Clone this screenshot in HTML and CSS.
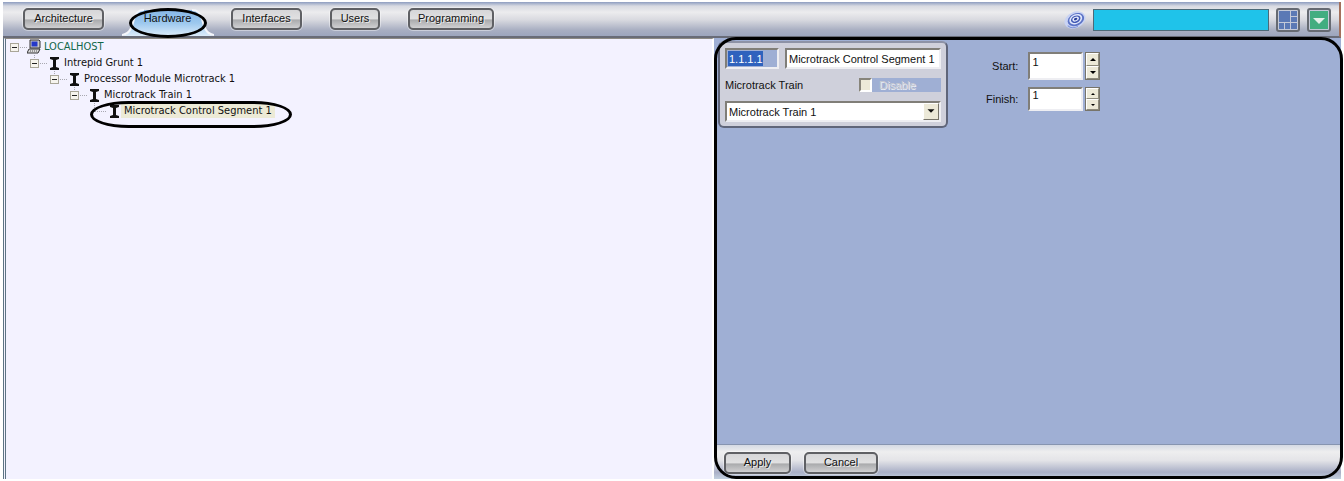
FILE: index.html
```html
<!DOCTYPE html>
<html lang="en">
  <head>
    <meta charset="UTF-8" />
    <meta name="viewport" content="width=device-width, initial-scale=1.0" />
    <title>Hardware</title>
    <link rel="stylesheet" href="styles.css">
  </head>
  <body>
    <!-- Shapes shared by the tree rows -->
    <svg class="defs" width="0" height="0">
      <symbol id="root" viewBox="0 0 17 16">
        <path d="M10 8.5h7" stroke="#a8a8b0" stroke-dasharray="1 1" />
        <rect x="0.5" y="4.5" width="8" height="8" fill="#f6f4ee" stroke="#a9a698" />
        <path d="M2 8.5h5" stroke="#222" />
      </symbol>
      <symbol id="toggle" viewBox="0 0 17 16">
        <path d="M4.5 0v4M10 8.5h7" stroke="#a8a8b0" stroke-dasharray="1 1" />
        <rect x="0.5" y="4.5" width="8" height="8" fill="#f6f4ee" stroke="#a9a698" />
        <path d="M2 8.5h5" stroke="#222" />
      </symbol>
      <symbol id="branch" viewBox="0 0 17 16">
        <path d="M4.5 0v9M5 8.5h12" stroke="#a8a8b0" stroke-dasharray="1 1" />
      </symbol>
      <symbol id="beam" viewBox="0 0 14 16">
        <path d="M3 2h9v2l-3 1v7l3 1v2h-9v-2l3-1v-7l-3-1z" fill="#111" />
      </symbol>
    </svg>

    <div class="app">
      <header class="toolbar">
        <nav class="tabs">
          <button class="btn tab-architecture">Architecture</button>
          <button class="tab-active">
            <svg class="tab-shape" width="92" height="27" viewBox="0 0 92 27">
              <defs>
                <linearGradient id="tabFill" x1="0" y1="0" x2="0" y2="1">
                  <stop offset="0" stop-color="#86b6e6" />
                  <stop offset="0.5" stop-color="#9cc8ee" />
                  <stop offset="1" stop-color="#dcecfa" />
                </linearGradient>
              </defs>
              <path d="M0 27C8 26 10 18 12 10Q14 1 22 1H70Q78 1 80 10C82 18 84 26 92 27Z" fill="url(#tabFill)" />
              <path d="M0 26C8 25 10 18 12 10Q14 1 22 1M70 1Q78 1 80 10C82 18 84 25 92 26" fill="none" stroke="#f4f6fb" stroke-width="2" />
            </svg>
            <span>Hardware</span>
          </button>
          <button class="btn tab-interfaces">Interfaces</button>
          <button class="btn tab-users">Users</button>
          <button class="btn tab-programming">Programming</button>
        </nav>
        <div class="status">
          <svg width="22" height="20" viewBox="0 0 22 20" fill="none">
            <g transform="rotate(-25 11 10)">
              <ellipse cx="11" cy="10" rx="11" ry="8" fill="#c9d3f3" />
              <ellipse cx="12" cy="10" rx="8.5" ry="6.2" fill="#5c73c6" />
              <ellipse cx="12" cy="9.600" rx="6.8" ry="4.8" fill="#dfe6fb" />
              <ellipse cx="12" cy="9.600" rx="5" ry="3.500" fill="#4259b4" />
              <ellipse cx="12" cy="9.400" rx="3.400" ry="2.200" fill="#e6ecfc" />
              <ellipse cx="12" cy="9.400" rx="1.800" ry="1.200" fill="#2b3f9c" />
              <path d="M2 12Q4 17 11 17" stroke="#7d92d8" />
            </g>
          </svg>
          <div class="status-bar"></div>
          <button class="icon-btn" aria-label="Layout">
            <svg width="18" height="18" viewBox="0 0 18 18" fill="#5b79b5">
              <path d="M0 0h11v11H0zM12 0h6v5h-6zM12 6h6v5h-6zM0 12h5v6H0zM6 12h5v6H6zM12 12h6v6h-6z" />
            </svg>
          </button>
          <button class="icon-btn" aria-label="Menu">
            <svg width="18" height="18" viewBox="0 0 18 18">
              <path d="M0 0h18v18H0z" fill="#42ad80" />
              <path d="M3 7h12l-6 6z" fill="#e2efe9" />
            </svg>
          </button>
        </div>
      </header>

      <main class="content">
        <section class="tree">
          <ul>
            <li>
              <div class="node host">
                <svg width="17" height="16"><use href="#root" /></svg>
                <svg width="14" height="16" viewBox="0 0 14 16">
                  <path d="M3 1h9l1 1v7H3z" fill="#c9c9c9" stroke="#333" />
                  <path d="M4.5 2.5h6v5h-6z" fill="#2438c8" />
                  <path d="M2 10h11l-2 4H0z" fill="#ddd" stroke="#333" />
                  <path d="M3 12h7" stroke="#555" stroke-dasharray="1 1" />
                </svg>
                <span>LOCALHOST</span>
              </div>
              <ul>
                <li>
                  <div class="node">
                    <svg width="17" height="16"><use href="#toggle" /></svg>
                    <svg width="14" height="16"><use href="#beam" /></svg>
                    <span>Intrepid Grunt 1</span>
                  </div>
                  <ul>
                    <li>
                      <div class="node">
                        <svg width="17" height="16"><use href="#toggle" /></svg>
                        <svg width="14" height="16"><use href="#beam" /></svg>
                        <span>Processor Module Microtrack 1</span>
                      </div>
                      <ul>
                        <li>
                          <div class="node">
                            <svg width="17" height="16"><use href="#toggle" /></svg>
                            <svg width="14" height="16"><use href="#beam" /></svg>
                            <span>Microtrack Train 1</span>
                          </div>
                          <ul>
                            <li>
                              <div class="node selected">
                                <svg width="17" height="16"><use href="#branch" /></svg>
                                <svg width="14" height="16"><use href="#beam" /></svg>
                                <span>Microtrack Control Segment 1</span>
                                <i class="ring ring-node"></i>
                              </div>
                            </li>
                          </ul>
                        </li>
                      </ul>
                    </li>
                  </ul>
                </li>
              </ul>
            </li>
          </ul>
        </section>

        <section class="details">
          <form class="form">
            <div class="card">
              <div class="row">
                <input class="field address" type="text" aria-label="Address" value="1.1.1.1" />
                <input class="field name" type="text" aria-label="Name" value="Microtrack Control Segment 1" />
              </div>
              <div class="row middle">
                <label for="train">Microtrack Train</label>
                <div class="disable">
                  <input type="checkbox" id="disable" disabled />
                  <label for="disable">Disable</label>
                </div>
              </div>
              <div class="select">
                <select class="field" id="train">
                  <option>Microtrack Train 1</option>
                </select>
                <svg class="arrow" width="16" height="17" viewBox="0 0 16 17">
                  <path d="M4 6h8l-4 4z" fill="#111" />
                </svg>
              </div>
            </div>

            <div class="range">
              <label for="start">Start:</label>
              <div class="spin spin-tall">
                <input class="field" type="text" id="start" value="1" />
                <div class="steps">
                  <button type="button" aria-label="Start up"><svg width="6" height="3"><path d="M0 3h6l-3-3z" /></svg></button>
                  <button type="button" aria-label="Start down"><svg width="6" height="3"><path d="M0 0h6l-3 3z" /></svg></button>
                </div>
              </div>
              <label for="finish">Finish:</label>
              <div class="spin">
                <input class="field" type="text" id="finish" value="1" />
                <div class="steps">
                  <button type="button" aria-label="Finish up"><svg width="4" height="2"><path d="M0 2h4l-2-2z" /></svg></button>
                  <button type="button" aria-label="Finish down"><svg width="4" height="2"><path d="M0 0h4l-2 2z" /></svg></button>
                </div>
              </div>
            </div>
          </form>
          <footer class="actions">
            <button class="btn apply">Apply</button>
            <button class="btn cancel">Cancel</button>
          </footer>
          <i class="ring ring-details"></i>
        </section>
      </main>
    </div>
  </body>
</html>
```
FILE: styles.css
```css
* {
  box-sizing: border-box;
}
body {
  margin: 0;
  background: #fff;
  color: #111;
  font-family: "Liberation Sans", Arial, sans-serif;
  font-size: 12px;
  line-height: 14px;
}
button,
input,
select {
  margin: 0;
  font: inherit;
  color: inherit;
}
svg {
  display: block;
  flex: none;
}
.defs {
  position: absolute;
}
.app {
  display: flex;
  flex-direction: column;
  min-height: 100vh;
  padding: 2px 3px;
}

/* Top bar */
.toolbar {
  display: flex;
  justify-content: space-between;
  align-items: flex-start;
  height: 36px;
  padding: 6px 8px 0 20px;
  border-bottom: 2px solid #696c78;
  border-right: 2px solid #a3705c;
  background: linear-gradient(#8d9dc0, #d8dae2 12%, #ececee 30%, #d9dae0 52%, #a9afc2 82%, #9ca5bd);
}
.tabs {
  display: flex;
  gap: 28px;
}
.btn {
  height: 22px;
  padding: 0 0 2px;
  border: 2px solid #5f6064;
  border-radius: 5px;
  background: linear-gradient(#d6d6d8, #e0e0e1 48%, #aaabad 56%, #d0d0d2);
  box-shadow: 0 0 0 1px rgba(255, 255, 255, 0.4);
  text-shadow: 1px 1px #eee;
  font-size: 11px;
}
.tab-architecture {
  width: 81px;
}
.tab-active {
  position: relative;
  width: 71px;
  height: 22px;
  padding: 0 0 2px;
  border: none;
  background: none;
  font-size: 11px;
}
.tab-active span {
  position: relative;
}
.tab-active::after {
  content: "";
  position: absolute;
  inset: 0 -4px -8px -3px;
  border: 3px solid #000;
  border-radius: 50%;
}
.tab-shape {
  position: absolute;
  top: 1px;
  left: -10px;
}
.tab-interfaces {
  width: 71px;
}
.tab-users {
  width: 50px;
}
.tab-programming {
  width: 86px;
}
.status {
  display: flex;
  align-items: center;
  gap: 7px;
}
.status-bar {
  width: 176px;
  height: 22px;
  border: 1px solid #4c6a78;
  background: #1fc3ea;
}
.icon-btn {
  display: flex;
  align-items: center;
  justify-content: center;
  width: 24px;
  height: 24px;
  padding: 0;
  border: 2px solid #666a72;
  border-radius: 3px;
  background: #c3c9d8;
}

/* Panels */
.content {
  flex: 1;
  display: grid;
  grid-template-columns: 711fr 627fr;
}
.tree {
  border-left: 3px double #5d7484;
  border-top: 1px solid #8d8a84;
  border-right: 2px solid #fff;
  background: #f3f2ff;
  font-family: "DejaVu Sans Condensed", Tahoma, sans-serif;
  font-size: 11px;
}
.tree ul {
  margin: 0;
  padding: 0 0 0 20px;
  list-style: none;
}
.tree > ul {
  padding-left: 4px;
}
.node {
  position: relative;
  display: flex;
  align-items: center;
  height: 16px;
}
.node span {
  padding: 0 3px;
  white-space: nowrap;
}
.host span {
  color: #12684a;
}
.selected span {
  background: #ecead6;
}
.ring {
  position: absolute;
  border: 3px solid #000;
  pointer-events: none;
}
.ring-node {
  top: -2px;
  left: 0;
  width: 202px;
  height: 27px;
  border-radius: 40px / 14px;
}
.ring-details {
  inset: -1px -2px 0 0;
  border-radius: 22px;
}

/* Details */
.details {
  position: relative;
  display: flex;
  flex-direction: column;
  background: #9fafd4;
}
.form {
  flex: 1;
  display: flex;
  align-items: flex-start;
  padding: 3px 4px;
  gap: 38px;
}
.card {
  display: flex;
  flex-direction: column;
  gap: 9px;
  width: 230px;
  height: 87px;
  padding: 5px;
  border: 2px solid #5f6579;
  border-top-color: #8d92a6;
  border-radius: 6px;
  background: #cfd0db;
}
.row {
  display: flex;
  align-items: center;
  gap: 6px;
}
.middle {
  justify-content: space-between;
}
.field {
  height: 21px;
  min-width: 0;
  padding: 0 2px;
  border: 2px solid;
  border-color: #807e78 #eeeef2 #eeeef2 #807e78;
  border-radius: 0;
  background: #fff;
  font-size: 11px;
}
.address {
  width: 54px;
  background: linear-gradient(#2f62bd, #2f62bd) 1px 1px / 35px 15px no-repeat #9fafd4;
  color: #fff;
}
.name {
  flex: 1;
}
.row label,
.range label {
  font-size: 11px;
}
.disable {
  display: flex;
  align-items: center;
  width: 82px;
  background: #9fafd4;
}
.disable input {
  appearance: none;
  width: 13px;
  height: 14px;
  border: 2px solid;
  border-color: #87847a #fff #fff #87847a;
  background: #ece9d8;
}
.disable label {
  padding-left: 7px;
  color: #c9cbd2;
  text-shadow: 1px 1px #eceef5;
}
.select {
  position: relative;
}
.select select {
  width: 100%;
  appearance: none;
}
.arrow {
  position: absolute;
  top: 2px;
  right: 2px;
  border: 1px solid;
  border-color: #fff #77746a #77746a #fff;
  background: #ece9d8;
}
.range {
  display: grid;
  grid-template-columns: auto auto;
  align-items: center;
  justify-items: end;
  gap: 7px 10px;
  padding-top: 11px;
}
.spin {
  display: flex;
  gap: 2px;
  height: 24px;
}
.spin-tall {
  height: 28px;
}
.spin .field {
  width: 55px;
  height: 100%;
  padding-bottom: 8px;
}
.steps {
  display: flex;
  flex-direction: column;
  width: 15px;
  border: 1px solid #77746a;
}
.steps button {
  flex: 1;
  display: flex;
  align-items: center;
  justify-content: center;
  min-height: 0;
  padding: 0;
  border: 1px solid;
  border-color: #fff #8d8a7c #8d8a7c #fff;
  background: #ece9d8;
}
.actions {
  display: flex;
  gap: 13px;
  padding: 7px 10px 5px;
  border-top: 1px solid #8795b0;
  background: linear-gradient(#d5dae4, #eeeeef 20%, #e4e4e8 45%, #a9afc6 80%, #c3d0e0);
}
.apply {
  width: 67px;
}
.cancel {
  width: 74px;
}
```
